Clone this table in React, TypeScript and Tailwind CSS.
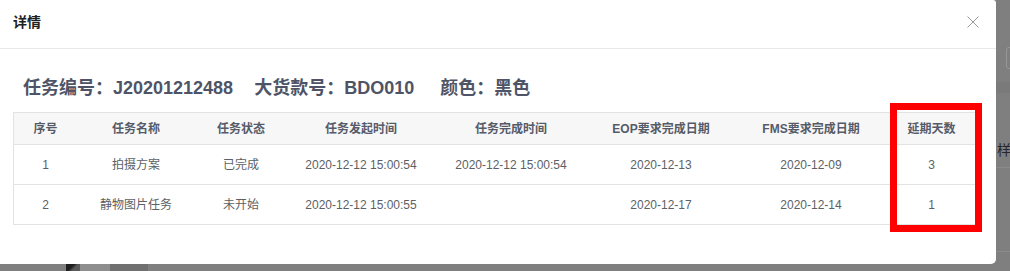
import React from "react";

type Row = {
  no: string;
  name: string;
  status: string;
  start: string;
  done: string;
  eop: string;
  fms: string;
  delay: string;
};

const headers = [
  "序号",
  "任务名称",
  "任务状态",
  "任务发起时间",
  "任务完成时间",
  "EOP要求完成日期",
  "FMS要求完成日期",
  "延期天数",
];

const rows: Row[] = [
  {
    no: "1",
    name: "拍摄方案",
    status: "已完成",
    start: "2020-12-12 15:00:54",
    done: "2020-12-12 15:00:54",
    eop: "2020-12-13",
    fms: "2020-12-09",
    delay: "3",
  },
  {
    no: "2",
    name: "静物图片任务",
    status: "未开始",
    start: "2020-12-12 15:00:55",
    done: "",
    eop: "2020-12-17",
    fms: "2020-12-14",
    delay: "1",
  },
];

const gridCols =
  "grid grid-cols-[63px_118px_92px_148px_152px_148px_152px_89px]";

function CloseIcon() {
  return (
    <svg width="12" height="12" viewBox="0 0 12 12" fill="none">
      <path d="M0.5 0.5L11.5 11.5M11.5 0.5L0.5 11.5" stroke="#9a9a9a" strokeWidth="1" />
    </svg>
  );
}

export default function App() {
  return (
    <div
      className="relative w-[1010px] h-[271px] overflow-hidden bg-[#7f7f7f]"
      style={{ fontFamily: '"Liberation Sans", "Noto Sans CJK SC", sans-serif' }}
    >
      {/* page behind the mask */}
      <div className="absolute left-[1006px] top-[47px] w-[24px] h-[22px] rounded-[3px] border border-[#969696]" />
      <div className="absolute left-[996px] top-[82px] w-[14px] h-[11px] bg-[#7a7a7a]" />
      <div className="absolute left-[997px] top-[140px] text-[14px] leading-[20px] text-[#262626] whitespace-nowrap">
        样衣
      </div>
      <div className="absolute left-[996px] top-[167px] w-[14px] h-px bg-[#8a8a8a]" />
      <div className="absolute left-[996px] top-[251px] w-[14px] h-px bg-[#8a8a8a]" />
      <div className="absolute left-[66px] top-[264px] w-[14px] h-[7px] bg-[linear-gradient(135deg,#1e1e1e_40%,#5a5a5a_60%)]" />
      <div className="absolute left-[80px] top-[264px] w-[30px] h-[7px] bg-[#8e8e8e]" />
      <div className="absolute left-[110px] top-[264px] w-[38px] h-[7px] bg-[#707070]" />

      {/* dialog */}
      <div className="relative w-[996px] h-[264px] bg-white rounded-br-[5px] rounded-tr-[3px]">
        <div className="flex h-[49px] items-center justify-between border-b border-[#e8e8e8] pl-[13px] pr-[17px]">
          <span className="text-[14px] font-bold text-[#1f1f1f] leading-[20px] -mt-[4px]">详情</span>
          <span className="-mt-[4px] flex">
            <CloseIcon />
          </span>
        </div>

        <div className="px-[13px] pt-[27px]">
          <div className="flex pl-[10px] text-[18px] font-bold leading-[24px] text-[#4e5466] whitespace-nowrap">
            <span>任务编号：J20201212488</span>
            <span className="ml-[21px]">大货款号：BDO010</span>
            <span className="ml-[26px]">颜色：黑色</span>
          </div>

          <div className="mt-[12px] w-[964px] border-x border-t border-[#e3e3e3] text-[12px]">
            <div className={`${gridCols} h-[32px] items-center border-b border-[#e3e3e3] bg-[#f7f7f7] font-bold text-[#555b69]`}>
              {headers.map((h) => (
                <div key={h} className="text-center whitespace-nowrap">
                  {h}
                </div>
              ))}
            </div>
            {rows.map((r) => (
              <div
                key={r.no}
                className={`${gridCols} h-[40px] items-center border-b border-[#e3e3e3] text-[#5c5f66]`}
              >
                <div className="text-center">{r.no}</div>
                <div className="text-center">{r.name}</div>
                <div className="text-center">{r.status}</div>
                <div className="text-center whitespace-nowrap">{r.start}</div>
                <div className="text-center whitespace-nowrap">{r.done}</div>
                <div className="text-center">{r.eop}</div>
                <div className="text-center">{r.fms}</div>
                <div className="text-center">{r.delay}</div>
              </div>
            ))}
          </div>
        </div>
      </div>

      {/* highlight around the delay column */}
      <div className="absolute left-[890px] top-[103px] w-[92px] h-[129px] border-[7px] border-[#ff0000]" />
    </div>
  );
}
